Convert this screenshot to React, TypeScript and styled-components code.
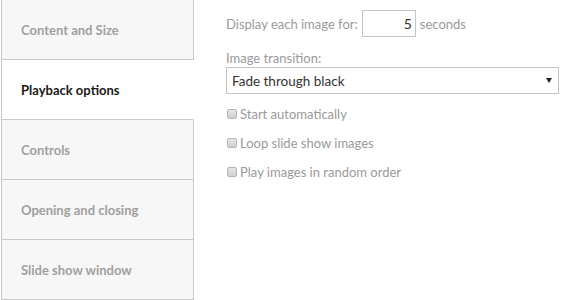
import styled, { createGlobalStyle } from 'styled-components';

const GlobalStyle = createGlobalStyle`
  body {
    margin: 0;
    background: #fff;
    font-family: Lato, "Open Sans", sans-serif;
  }
`;

const tabs = [
  'Content and Size',
  'Playback options',
  'Controls',
  'Opening and closing',
  'Slide show window',
];

const Page = styled.div`
  display: flex;
  height: 300px;
  overflow: hidden;
`;

const Sidebar = styled.div`
  width: 193px;
  margin-left: 1px;
  display: flex;
  flex-direction: column;
  flex-shrink: 0;
`;

const Tab = styled.div<{ $active?: boolean }>`
  height: 59px;
  flex-shrink: 0;
  display: flex;
  align-items: center;
  padding-left: 19px;
  box-sizing: content-box;
  border-left: 1px solid #c9c9c9;
  border-bottom: 1px solid #c9c9c9;
  border-right: 1px solid ${(p) => (p.$active ? '#fff' : '#c9c9c9')};
  background: ${(p) => (p.$active ? '#fff' : '#f7f7f7')};
  color: ${(p) => (p.$active ? '#1a1a1a' : '#a0a0a0')};
  font-size: 13px;
  font-weight: 700;
`;

const Panel = styled.div`
  flex: 1;
  padding: 10px 10px 0 32px;
  color: #9a9a9a;
  font-size: 13px;
`;

const InlineRow = styled.div`
  display: flex;
  align-items: center;
  gap: 4px;
  height: 27px;
`;

const NumberBox = styled.div`
  width: 49px;
  height: 25px;
  border: 1px solid #c4c4c4;
  color: #333;
  font-size: 14px;
  display: flex;
  align-items: center;
  justify-content: flex-end;
  padding-right: 3px;
  box-sizing: content-box;
`;

const Label = styled.div`
  margin-top: 13px;
  line-height: 16px;
`;

const Select = styled.div`
  margin-top: 1px;
  height: 25px;
  border: 1px solid #c4c4c4;
  display: flex;
  align-items: center;
  justify-content: space-between;
  padding: 0 6px 0 5px;
  color: #333;
  font-size: 13.5px;
`;

const Arrow = styled.span`
  width: 0;
  height: 0;
  border-left: 3px solid transparent;
  border-right: 3px solid transparent;
  border-top: 5px solid #222;
`;

const Checks = styled.div`
  margin-top: 5px;
  display: flex;
  flex-direction: column;
`;

const CheckRow = styled.div`
  display: flex;
  align-items: center;
  gap: 3px;
  height: 29px;
`;

const Box = styled.span`
  width: 8px;
  height: 8px;
  border: 1px solid #b5b5b5;
  border-radius: 2px;
  background: linear-gradient(#e6e6e6, #cfcfcf);
  margin-left: 1px;
`;

const options = [
  'Start automatically',
  'Loop slide show images',
  'Play images in random order',
];

export default function App() {
  return (
    <Page>
      <GlobalStyle />
      <Sidebar>
        {tabs.map((t, i) => (
          <Tab key={t} $active={i === 1}>
            {t}
          </Tab>
        ))}
      </Sidebar>
      <Panel>
        <InlineRow>
          <span>Display each image for:</span>
          <NumberBox>5</NumberBox>
          <span>seconds</span>
        </InlineRow>
        <Label>Image transition:</Label>
        <Select>
          <span>Fade through black</span>
          <Arrow />
        </Select>
        <Checks>
          {options.map((o) => (
            <CheckRow key={o}>
              <Box />
              <span>{o}</span>
            </CheckRow>
          ))}
        </Checks>
      </Panel>
    </Page>
  );
}
